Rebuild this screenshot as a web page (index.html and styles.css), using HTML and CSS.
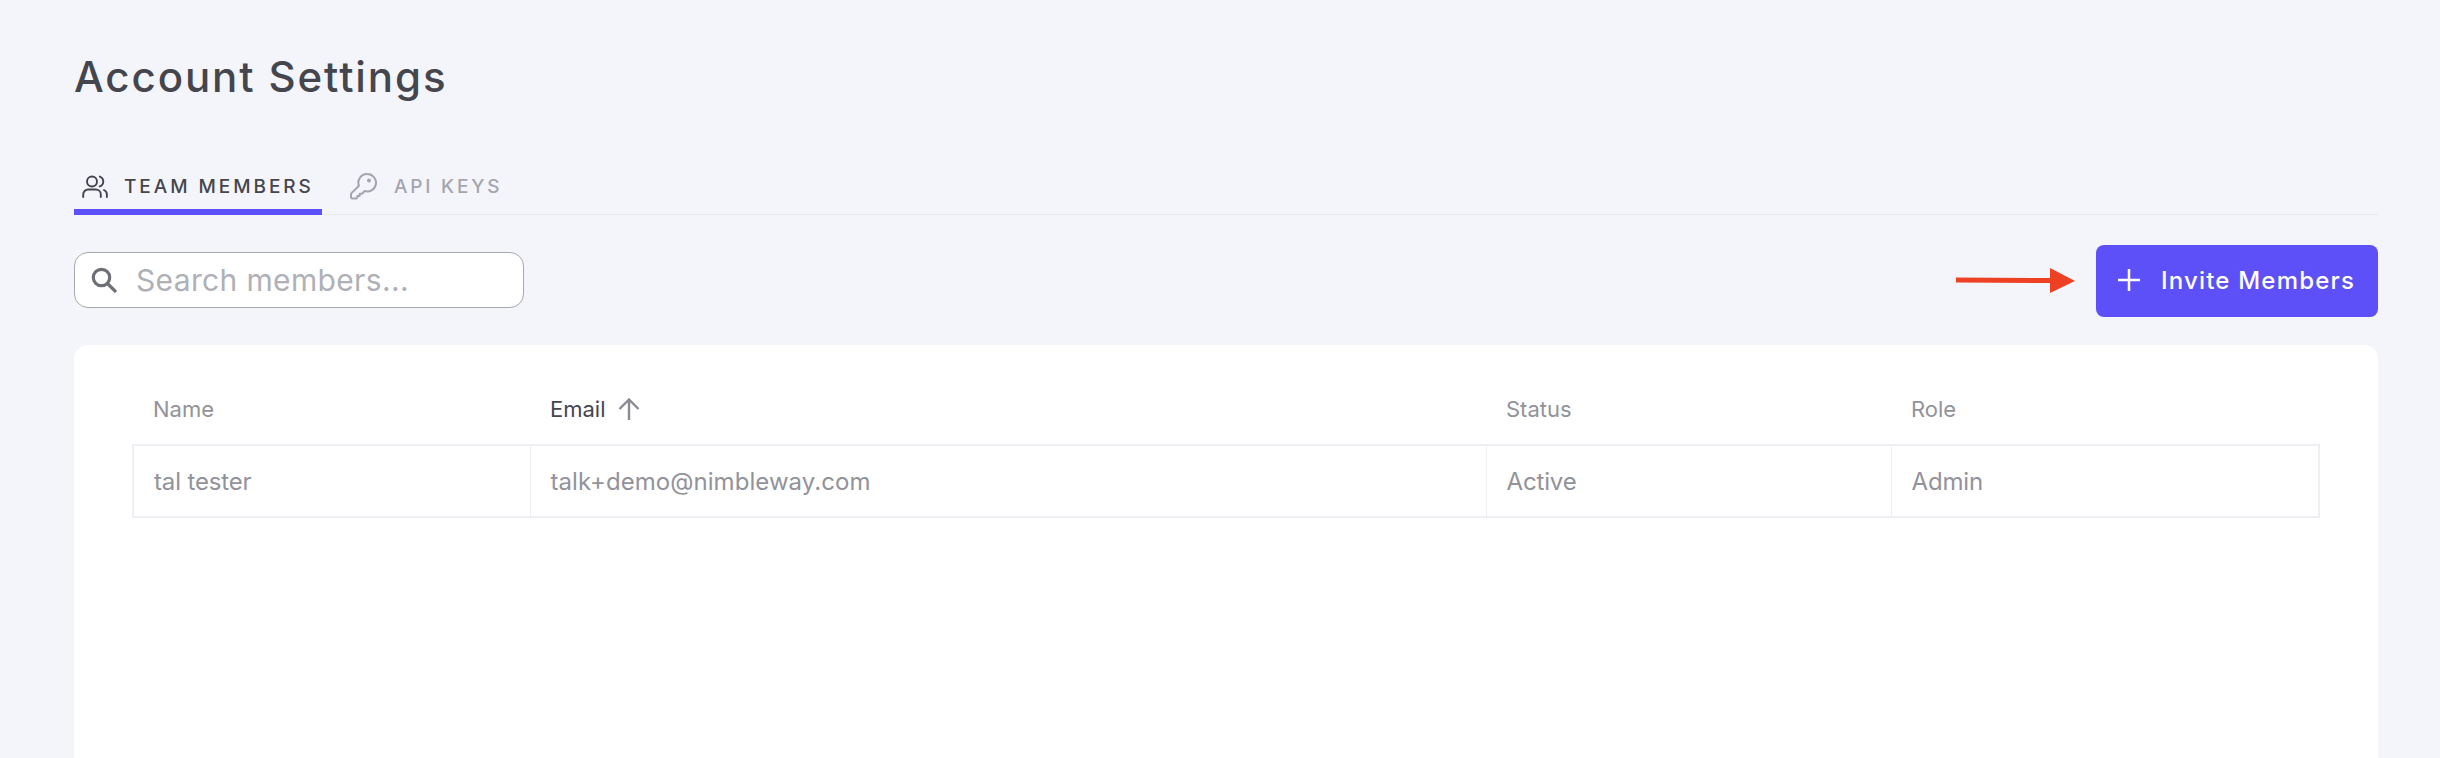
FILE: index.html
```html
<!DOCTYPE html>
<html lang="en">
<head>
<meta charset="utf-8">
<title>Account Settings</title>
<link rel="stylesheet" href="styles.css">
</head>
<body>
<main class="page">
  <h1 class="title">Account Settings</h1>
  <nav class="tabs">
    <a class="tab tab-active">
      <svg class="tab-icon" viewBox="0 0 26 23" fill="none" stroke="currentColor" stroke-width="1.900" stroke-linecap="round"><circle cx="10" cy="6.500" r="5"/><path d="M1.200 22v-2.500a5 5 0 0 1 5-5h7.600a5 5 0 0 1 5 5V22"/><path d="M17.800 1.600a5.200 5.200 0 0 1 0 9.800"/><path d="M22 15a5 5 0 0 1 2.900 4.500V22"/></svg>
      <span>TEAM MEMBERS</span>
    </a>
    <a class="tab">
      <svg class="key" viewBox="0 0 27 27" fill="none" stroke="currentColor" stroke-width="2" stroke-linecap="round" stroke-linejoin="round"><path d="M17.300 1a8.700 8.700 0 1 1-2.600 17l-2.700 2.700H9.700V23H7.300v1.500l-1 1H2.500c-1 0-1.500-.6-1.500-1.500v-2.700c0-.5.2-.9.500-1.200l7.400-7.400A8.700 8.700 0 0 1 17.300 1z"/><circle cx="19" cy="7.500" r="1" fill="currentColor"/></svg>
      <span>API KEYS</span>
    </a>
  </nav>
  <div class="toolbar">
    <label class="search">
      <svg class="search-icon" viewBox="0 0 26 26" fill="none" stroke="currentColor" stroke-width="3.200"><circle cx="10.500" cy="10.500" r="8.200"/><path d="M16.500 16.500l8.500 8.500"/></svg>
      <span class="search-text">Search members...</span>
    </label>
    <svg class="annotation" viewBox="0 0 120 26"><path d="M0 9.500l95 .5v5l-95-.5z" fill="#ee4023"/><path d="M94 0l25 13L94 25z" fill="#ee4023"/></svg>
    <button class="invite">
      <svg class="plus" viewBox="0 0 22 22" stroke="currentColor" stroke-width="2.500"><path d="M11 0v22M0 11h22"/></svg>
      <span>Invite Members</span>
    </button>
  </div>
  <section class="card">
    <table class="members">
      <colgroup>
        <col class="col-name"><col class="col-email"><col class="col-status"><col class="col-role">
      </colgroup>
      <thead>
        <tr>
          <th>Name</th>
          <th class="sorted"><span class="sort-wrap">Email<svg class="sort" viewBox="0 0 22 22" fill="none" stroke="#8a8a94" stroke-width="2.400"><path d="M11 22V1.500M1.500 11L11 1.500 20.500 11"/></svg></span></th>
          <th>Status</th>
          <th>Role</th>
        </tr>
      </thead>
      <tbody>
        <tr>
          <td>tal tester</td>
          <td class="cell-email">talk+demo@nimbleway.com</td>
          <td>Active</td>
          <td>Admin</td>
        </tr>
      </tbody>
    </table>
  </section>
</main>
</body>
</html>
```
FILE: styles.css
```css
* { box-sizing: border-box; }
html, body { margin: 0; height: 100%; }
body {
  background: #f4f5fa;
  font-family: "Inter", "Noto Sans", sans-serif;
  color: #45454d;
  overflow: hidden;
}
.page { padding: 50px 62px 0 74px; height: 758px; display: flex; flex-direction: column; }
.title {
  margin: 0;
  font-size: 42px;
  line-height: 54px;
  font-weight: 500;
  letter-spacing: 1.900px;
  color: #45454d;
}
.tabs {
  margin-top: 61px;
  height: 50px;
  display: flex;
  border-bottom: 1px solid #e9eaef;
}
.tab {
  height: 50px;
  display: flex;
  align-items: center;
  gap: 17px;
  padding: 0 8px 8px;
  font-size: 19px;
  letter-spacing: 2.800px;
  font-weight: 500;
  color: #a5a5ad;
}
.tab-active {
  width: 248px;
  gap: 16px;
  letter-spacing: 2.950px;
  color: #45454d;
  border-bottom: 6px solid #5d50f8;
  padding: 0 8px 2px;
  margin-right: 20px;
}
.tab-icon { width: 26px; height: 23px; flex: none; }
.key { width: 27px; height: 27px; flex: none; }
.toolbar {
  margin-top: 30px;
  display: flex;
  align-items: flex-start;
  justify-content: space-between;
  position: relative;
  height: 72px;
}
.search {
  width: 450px;
  height: 56px;
  margin-top: 7px;
  background: #fff;
  border: 1.500px solid #a8a8b0;
  border-radius: 14px;
  display: flex;
  align-items: center;
  padding: 0 16px;
  gap: 19px;
}
.search-icon { width: 26px; height: 26px; color: #6f6f77; flex: none; }
.search-text { font-size: 30px; letter-spacing: .350px; color: #b0b0b7; font-weight: 400; }
.annotation {
  position: absolute;
  left: 1882px;
  top: 23px;
  width: 120px;
  height: 26px;
}
.invite {
  width: 282px;
  height: 72px;
  border: 0;
  border-radius: 8px;
  background: #5d50f8;
  color: #fff;
  display: flex;
  align-items: center;
  gap: 21px;
  padding: 0 0 2px 22px;
  font-family: inherit;
  font-size: 24px;
  font-weight: 500;
  letter-spacing: 1.200px;
}
.plus { width: 22px; height: 22px; flex: none; }
.card {
  margin-top: 28px;
  flex: 1;
  background: #fff;
  border-radius: 14px 14px 0 0;
  padding: 0 58px;
}
.members {
  width: 100%;
  border-collapse: collapse;
  table-layout: fixed;
}
.col-name { width: 397px; }
.col-email { width: 956px; }
.col-status { width: 405px; }
.col-role { width: auto; }
.members th {
  height: 100px;
  padding: 28px 20px 0;
  text-align: left;
  font-size: 22px;
  font-weight: 400;
  color: #92929a;
}
.members th.sorted { color: #45454d; }
.sort-wrap { display: inline-flex; align-items: center; gap: 12px; }
.sort { width: 22px; height: 22px; }
.members td {
  height: 72px;
  padding: 0 20px;
  border-style: solid;
  border-color: #eeeff3;
  border-width: 2px 1px;
  font-size: 24px;
  letter-spacing: -.150px;
  color: #92929a;
}
.members td:first-child { border-left-width: 2px; }
.members td:last-child { border-right-width: 2px; }
.members .cell-email { letter-spacing: .050px; }
```
